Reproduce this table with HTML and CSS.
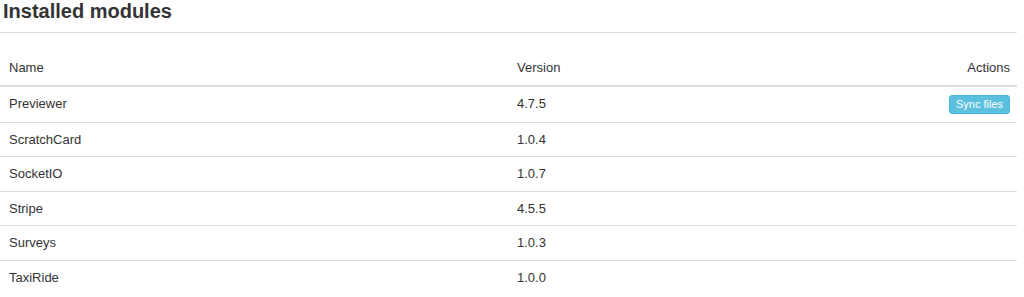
FILE: index.html
```html
<!DOCTYPE html>
<html>
<head>
<meta charset="utf-8">
<link rel="stylesheet" href="styles.css">
</head>
<body>
<div class="page">
  <div class="page-header">
    <h3 class="title">Installed modules</h3>
  </div>
  <table class="modules">
    <colgroup>
      <col class="col-name">
      <col class="col-version">
      <col class="col-actions">
    </colgroup>
    <thead>
      <tr><th>Name</th><th>Version</th><th class="right">Actions</th></tr>
    </thead>
    <tbody>
      <tr><td>Previewer</td><td>4.7.5</td><td class="right"><button class="btn-sync">Sync files</button></td></tr>
      <tr><td>ScratchCard</td><td>1.0.4</td><td></td></tr>
      <tr><td>SocketIO</td><td>1.0.7</td><td></td></tr>
      <tr><td>Stripe</td><td>4.5.5</td><td></td></tr>
      <tr><td>Surveys</td><td>1.0.3</td><td></td></tr>
      <tr><td>TaxiRide</td><td>1.0.0</td><td></td></tr>
    </tbody>
  </table>
</div>
</body>
</html>
```
FILE: styles.css
```css
html, body {
  margin: 0;
  padding: 0;
  background: #fff;
}
body {
  font-family: "Liberation Sans", Arial, sans-serif;
  color: #333;
  font-size: 13px;
}
.page {
  width: 1017px;
}
.page-header {
  padding: 0 0 10px 3px;
  border-bottom: 1px solid #dedede;
  margin-bottom: 18px;
}
.title {
  margin: 0;
  font-size: 20px;
  line-height: 22px;
  font-weight: bold;
  color: #333;
}
.modules {
  width: 100%;
  border-collapse: collapse;
  border-spacing: 0;
}
.col-name { width: 508px; }
.col-version { width: 300px; }
.modules th,
.modules td {
  padding: 8px 8px 8px 9px;
  line-height: 17.5px;
  text-align: left;
  vertical-align: middle;
  font-weight: normal;
}
.modules thead th {
  border-bottom: 2px solid #ddd;
}
.modules tbody td {
  border-top: 1px solid #ddd;
}
.modules tbody tr:first-child td {
  border-top: 0;
}
.modules .right {
  text-align: right;
  padding-right: 7px;
}
.btn-sync {
  display: inline-block;
  font-family: "Liberation Sans", Arial, sans-serif;
  font-size: 11px;
  line-height: 15px;
  height: 19px;
  padding: 1px 6px;
  color: #fff;
  background: #5bc0de;
  border: 1px solid #46b8da;
  border-radius: 3px;
  vertical-align: middle;
}
```
